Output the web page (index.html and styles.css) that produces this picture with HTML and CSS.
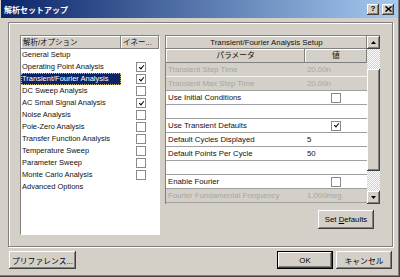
FILE: index.html
```html
<!DOCTYPE html>
<html lang="ja">

<head>
    <meta charset="UTF-8">
    <title>解析セットアップ</title>
    <link rel="stylesheet" href="styles.css">
</head>

<body>
    <div class="window">
        <div class="titlebar">
            <span class="title">解析セットアップ</span>
            <div class="caps">
                <span class="cap">?</span>
                <span class="cap">
                    <svg width="7" height="6" viewBox="0 0 7 6"><path d="M0.5 0.5 L6.5 5.5 M6.5 0.5 L0.5 5.5" stroke="#000" stroke-width="1.5"/></svg>
                </span>
            </div>
        </div>

        <div class="group">
            <!-- analysis list -->
            <div class="list">
                <div class="list-head">
                    <span class="lh lh-name">解析/オプション</span>
                    <span class="lh lh-en">イネー...</span>
                </div>
                <div class="item"><span class="name">General Setup</span></div>
                <div class="item"><span class="name">Operating Point Analysis</span><span class="cell"><span class="cb on"></span></span></div>
                <div class="item sel"><span class="name">Transient/Fourier Analysis</span><span class="cell"><span class="cb on"></span></span></div>
                <div class="item"><span class="name">DC Sweep Analysis</span><span class="cell"><span class="cb"></span></span></div>
                <div class="item"><span class="name">AC Small Signal Analysis</span><span class="cell"><span class="cb on"></span></span></div>
                <div class="item"><span class="name">Noise Analysis</span><span class="cell"><span class="cb"></span></span></div>
                <div class="item"><span class="name">Pole-Zero Analysis</span><span class="cell"><span class="cb"></span></span></div>
                <div class="item"><span class="name">Transfer Function Analysis</span><span class="cell"><span class="cb"></span></span></div>
                <div class="item"><span class="name">Temperature Sweep</span><span class="cell"><span class="cb"></span></span></div>
                <div class="item"><span class="name">Parameter Sweep</span><span class="cell"><span class="cb"></span></span></div>
                <div class="item"><span class="name">Monte Carlo Analysis</span><span class="cell"><span class="cb"></span></span></div>
                <div class="item"><span class="name">Advanced Options</span></div>
            </div>

            <!-- setup grid -->
            <div class="setup">
                <div class="grid-wrap">
                    <div class="grid">
                        <div class="gh1">Transient/Fourier Analysis Setup</div>
                        <div class="gh2"><span class="gp">パラメータ</span><span class="gv">値</span></div>
                        <div class="grow dis first"><span class="p">Transient Step Time</span><span class="v">20.00n</span></div>
                        <div class="grow dis"><span class="p">Transient Max Step Time</span><span class="v">20.00n</span></div>
                        <div class="grow"><span class="p">Use Initial Conditions</span><span class="v"><span class="cb"></span></span></div>
                        <div class="grow"><span class="p"></span><span class="v"></span></div>
                        <div class="grow"><span class="p">Use Transient Defaults</span><span class="v"><span class="cb on"></span></span></div>
                        <div class="grow"><span class="p">Default Cycles Displayed</span><span class="v">5</span></div>
                        <div class="grow"><span class="p">Default Points Per Cycle</span><span class="v">50</span></div>
                        <div class="grow"><span class="p"></span><span class="v"></span></div>
                        <div class="grow"><span class="p">Enable Fourier</span><span class="v"><span class="cb"></span></span></div>
                        <div class="grow dis"><span class="p">Fourier Fundamental Frequency</span><span class="v">1.000meg</span></div>
                    </div>
                    <div class="scroll">
                        <div class="sbtn"><svg width="5" height="3" viewBox="0 0 5 3"><path d="M2.5 0 L5 3 L0 3Z"/></svg></div>
                        <div class="track top"></div>
                        <div class="thumb"></div>
                        <div class="track"></div>
                        <div class="sbtn"><svg width="5" height="3" viewBox="0 0 5 3"><path d="M0 0 L5 0 L2.5 3Z"/></svg></div>
                    </div>
                </div>
                <button class="btn set-defaults">Set <u>D</u>efaults</button>
            </div>
        </div>

        <div class="footer">
            <button class="btn pref">プリファレンス...</button>
            <button class="btn ok">OK</button>
            <button class="btn cancel">キャンセル</button>
        </div>
    </div>
</body>

</html>
```

FILE: styles.css
```css
* {
    margin: 0;
    padding: 0;
    box-sizing: border-box;
}

body {
    width: 400px;
    height: 277px;
    overflow: hidden;
    background: #d4d0c8;
    font-family: "Liberation Sans", "Noto Sans CJK JP", sans-serif;
    font-size: 7.5px;
    color: #111;
}

.window {
    width: 400px;
    height: 277px;
    background: #d4d0c8;
    box-shadow: inset -1px -1px #404040, inset -2px -2px #808080;
}

.titlebar {
    height: 18px;
    margin: 0 2px 0 1px;
    padding: 0 4px 0 3px;
    display: flex;
    align-items: center;
    background: linear-gradient(to right, #0a246a, #a6caf0);
    color: #fff;
    font-weight: bold;
    font-size: 8px;
}

.title {
    flex: 1;
}

.caps {
    display: flex;
    gap: 3px;
}

.cap {
    width: 12px;
    height: 11px;
    display: flex;
    align-items: center;
    justify-content: center;
    background: #d4d0c8;
    color: #000;
    font-size: 8px;
    line-height: 1;
    box-shadow: inset -1px -1px #404040, inset 1px 1px #fff, inset -2px -2px #808080;
}

.group {
    margin: 4px 0 0 8px;
    width: 385px;
    height: 225px;
    border: 1px solid #808080;
    box-shadow: inset 1px 1px #fff, 1px 1px #fff;
    padding: 12px 0 0 11px;
    display: flex;
    gap: 5px;
}

/* list */

.list {
    width: 140px;
    height: 200px;
    background: #fff;
    border: 1px solid;
    border-color: #808080 #fff #fff #808080;
}

.list-head {
    display: flex;
    height: 13px;
}

.lh {
    background: #d4d0c8;
    line-height: 13px;
    padding-left: 2px;
    white-space: nowrap;
    overflow: hidden;
    box-shadow: inset -1px -1px #808080, inset 1px 1px #fff;
}

.lh-name {
    width: 100px;
}

.lh-en {
    flex: 1;
}

.item {
    display: flex;
    height: 12px;
    align-items: center;
}

.item .name {
    width: 100px;
    height: 12px;
    line-height: 12px;
    padding-left: 1px;
    white-space: nowrap;
}

.item.sel .name {
    background: #0a246a;
    color: #fff;
    outline: 1px dotted #c8b878;
    outline-offset: -1px;
}

.item .cell {
    padding-left: 15px;
    display: flex;
}

.cb {
    display: inline-block;
    width: 10px;
    height: 10px;
    background: #fff;
    border: 1px solid #8a8a8a;
    position: relative;
}

.cb.on::after {
    content: "";
    position: absolute;
    left: 2.5px;
    top: 0.5px;
    width: 2px;
    height: 4px;
    border: solid #000;
    border-width: 0 1.5px 1.5px 0;
    transform: rotate(40deg);
}

/* grid */

.setup {
    width: 215px;
    display: flex;
    flex-direction: column;
    align-items: flex-end;
}

.grid-wrap {
    width: 215px;
    height: 169px;
    display: flex;
    border-top: 1px solid #808080;
    border-left: 1px solid #808080;
    font-size: 7.8px;
}

.grid {
    width: 201px;
}

.gh1 {
    height: 13px;
    line-height: 13px;
    text-align: center;
    background: #d4d0c8;
    box-shadow: inset -1px -1px #808080, inset 1px 1px #fff;
}

.gh2 {
    display: flex;
    height: 14px;
    line-height: 14px;
    text-align: center;
}

.gh2 span {
    background: #d4d0c8;
    box-shadow: inset -1px -1px #808080, inset 1px 1px #fff;
}

.gp {
    width: 139px;
}

.gv {
    flex: 1;
}

.grow {
    display: flex;
    height: 14px;
    line-height: 13px;
    background: #fff;
    border-bottom: 1px solid #a0a0a0;
}

.grow.dis {
    background: #d4d0c8;
    color: #a6a6a6;
}

.grow.first {
    border-bottom-color: #f4f4f4;
}

.grow .p {
    width: 139px;
    padding-left: 2px;
    white-space: nowrap;
}

.grow .v {
    flex: 1;
    padding-left: 2px;
    display: flex;
    align-items: center;
}

.grow .v .cb {
    margin-left: 24px;
}

.scroll {
    width: 13px;
    display: flex;
    flex-direction: column;
}

.sbtn,
.thumb {
    background: #d4d0c8;
    box-shadow: inset -1px -1px #404040, inset 1px 1px #fff, inset -2px -2px #808080;
}

.sbtn {
    height: 13px;
    display: flex;
    align-items: center;
    justify-content: center;
}

.track {
    flex: 1;
    background: repeating-conic-gradient(#d4d0c8 0 25%, #fff 0 50%) 0 0 / 2px 2px;
}

.track.top {
    flex: 0 0 20px;
}

.thumb {
    height: 102px;
}

/* buttons */

.btn {
    font: inherit;
    font-size: 7.8px;
    color: #000;
    background: #d4d0c8;
    border: none;
    height: 18px;
    box-shadow: inset -1px -1px #404040, inset 1px 1px #fff, inset -2px -2px #808080;
}

.set-defaults {
    width: 56px;
    height: 19px;
    margin: 6px 6px 0 0;
}

.footer {
    display: flex;
    gap: 3px;
    margin-top: 4px;
    padding: 0 8px 0 9px;
}

.pref {
    width: 67px;
    margin-right: auto;
}

.ok,
.cancel {
    width: 56px;
}

.ok {
    box-shadow: inset 0 0 0 1px #000, inset -2px -2px #404040, inset 2px 2px #fff, inset -3px -3px #808080;
}
```
